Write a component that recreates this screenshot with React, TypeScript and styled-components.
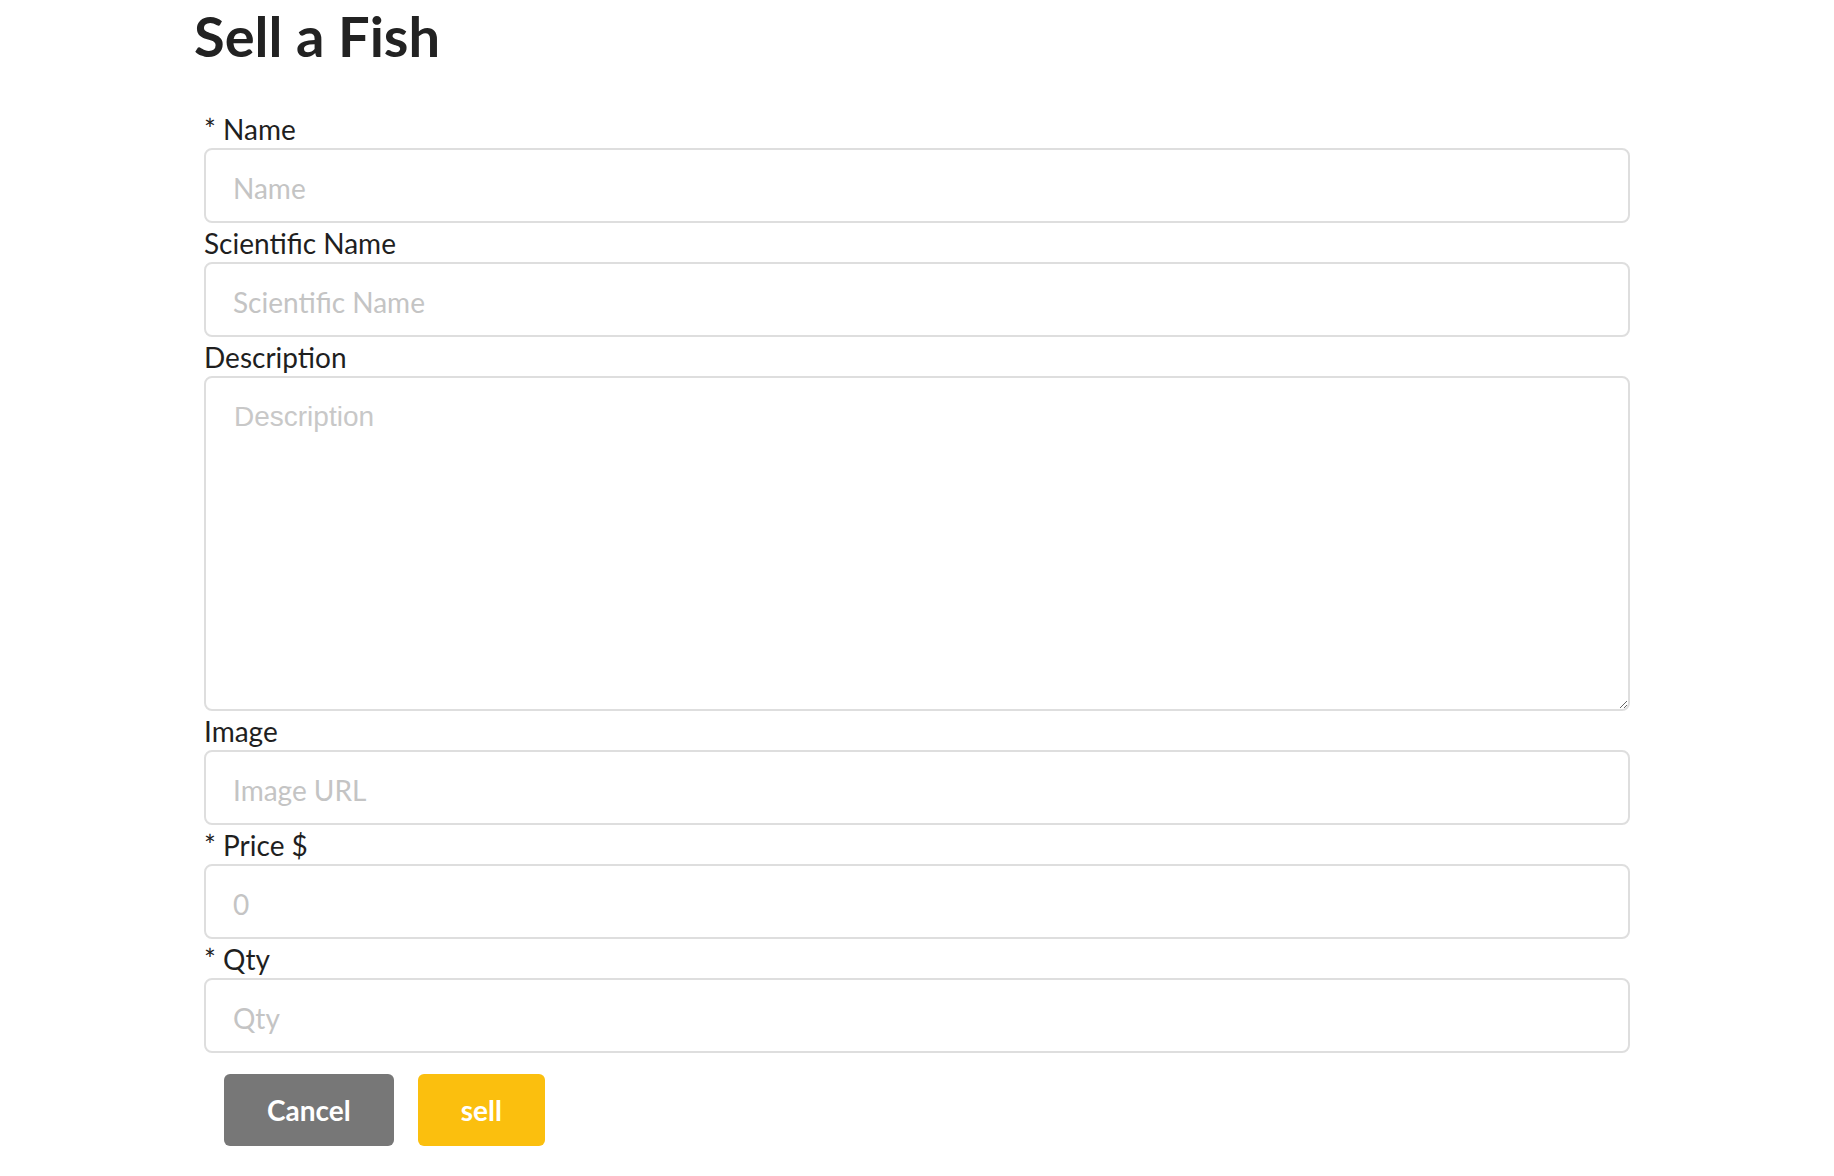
import React from 'react';
import styled, { createGlobalStyle } from 'styled-components';

const GlobalStyle = createGlobalStyle`
  body {
    margin: 0;
    background: #fff;
    font-family: Lato, 'Open Sans', sans-serif;
    color: #222;
  }
  * {
    box-sizing: border-box;
  }
`;

const Page = styled.div`
  width: 1450px;
  margin: 0 auto;
`;

const Title = styled.h1`
  margin: 0;
  padding: 2px 0 0 2px;
  font-size: 56px;
  line-height: 67px;
  font-weight: 700;
  color: #222;
`;

const Form = styled.form`
  margin-top: 40px;
  padding: 0 12px;
  display: flex;
  flex-direction: column;
`;

const Label = styled.label`
  display: block;
  padding-top: 2px;
  font-size: 28px;
  line-height: 37px;
  color: #1f1f1f;
`;

const Input = styled.input`
  display: block;
  width: 100%;
  height: 75px;
  padding: 4px 27px 0;
  border: 2px solid #dedede;
  border-radius: 8px;
  font-family: Lato, sans-serif;
  font-size: 28px;
  color: #222;
  outline: none;
  &::placeholder {
    color: #c4c4c4;
  }
`;

const TextArea = styled.textarea`
  display: block;
  width: 100%;
  height: 335px;
  padding: 23px 28px;
  border: 2px solid #dedede;
  border-radius: 8px;
  font-family: 'Helvetica Neue', 'Liberation Sans', Arial, sans-serif;
  font-size: 28px;
  color: #222;
  outline: none;
  &::placeholder {
    color: #c8c8c8;
  }
`;

const Actions = styled.div`
  display: flex;
  gap: 24px;
  margin: 21px 0 0 20px;
`;

const Button = styled.button<{ $tone: 'cancel' | 'primary' }>`
  height: 72px;
  padding: 0 43px;
  border: none;
  border-radius: 6px;
  background: ${({ $tone }) => ($tone === 'cancel' ? '#777777' : '#fbbf0e')};
  color: #fff;
  font-family: Lato, sans-serif;
  font-size: 28px;
  font-weight: 700;
  cursor: pointer;
`;

type Field = {
  label: string;
  placeholder: string;
  multiline?: boolean;
};

const fields: Field[] = [
  { label: '* Name', placeholder: 'Name' },
  { label: 'Scientific Name', placeholder: 'Scientific Name' },
  { label: 'Description', placeholder: 'Description', multiline: true },
  { label: 'Image', placeholder: 'Image URL' },
  { label: '* Price $', placeholder: '0' },
  { label: '* Qty', placeholder: 'Qty' },
];

export default function App() {
  return (
    <>
      <GlobalStyle />
      <Page>
        <Title>Sell a Fish</Title>
        <Form onSubmit={(e) => e.preventDefault()}>
          {fields.map((f) => (
            <div key={f.label}>
              <Label>{f.label}</Label>
              {f.multiline ? (
                <TextArea placeholder={f.placeholder} />
              ) : (
                <Input placeholder={f.placeholder} />
              )}
            </div>
          ))}
          <Actions>
            <Button type="button" $tone="cancel">
              Cancel
            </Button>
            <Button type="submit" $tone="primary">
              sell
            </Button>
          </Actions>
        </Form>
      </Page>
    </>
  );
}
